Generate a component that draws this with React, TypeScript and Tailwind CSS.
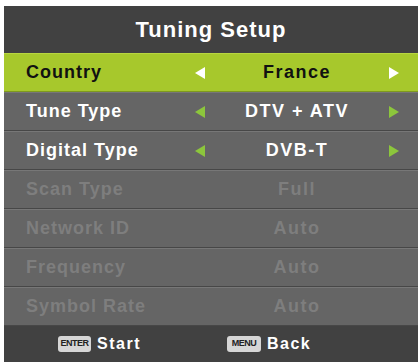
import React from "react";

type Row = { label: string; value: string; state: "active" | "normal" | "disabled" };

const rows: Row[] = [
  { label: "Country", value: "France", state: "active" },
  { label: "Tune Type", value: "DTV + ATV", state: "normal" },
  { label: "Digital Type", value: "DVB-T", state: "normal" },
  { label: "Scan Type", value: "Full", state: "disabled" },
  { label: "Network ID", value: "Auto", state: "disabled" },
  { label: "Frequency", value: "Auto", state: "disabled" },
  { label: "Symbol Rate", value: "Auto", state: "disabled" },
];

function Arrow({ dir, color }: { dir: "left" | "right"; color: string }) {
  return (
    <svg width="10" height="12" viewBox="0 0 10 12">
      {dir === "left" ? (
        <polygon points="10,0 10,12 0,6" fill={color} />
      ) : (
        <polygon points="0,0 0,12 10,6" fill={color} />
      )}
    </svg>
  );
}

function MenuRow({ row }: { row: Row }) {
  const active = row.state === "active";
  const disabled = row.state === "disabled";
  const bg = active
    ? "bg-[#a7c82c] border-t-[#b8d640] border-b-[#7f9a1e]"
    : "bg-[#656565] border-t-[#777777] border-b-[#474747]";
  const text = active ? "text-[#111111]" : disabled ? "text-[#7e7e7e]" : "text-white";
  const arrow = active ? "#ffffff" : "#8cc63c";

  return (
    <div className={`flex h-[39px] items-center border-t border-b ${bg}`}>
      <div className={`w-[186px] pl-[22px] text-[18px] font-bold tracking-[1px] ${text}`}>{row.label}</div>
      <div className="flex w-[20px] justify-center">
        {!disabled && <Arrow dir="left" color={arrow} />}
      </div>
      <div className={`flex-1 text-center text-[18px] font-bold tracking-[1.5px] ${text}`}>{row.value}</div>
      <div className="flex w-[20px] justify-center">
        {!disabled && <Arrow dir="right" color={arrow} />}
      </div>
      <div className="w-[14px]" />
    </div>
  );
}

function KeyBadge({ label, width }: { label: string; width: string }) {
  return (
    <span
      className={`flex h-[16px] ${width} items-center justify-center rounded-[3px] bg-[#d6d6d6] text-[9px] font-bold tracking-[-0.5px] text-[#222222]`}
    >
      {label}
    </span>
  );
}

export default function App() {
  return (
    <div className="h-[362px] w-[420px] bg-white pt-[6px] font-['Liberation_Sans',Arial,sans-serif]">
      <div className="ml-[4px] flex h-[356px] w-[414px] flex-col bg-[#414141]">
        <div className="flex h-[47px] items-center justify-center text-[22px] font-bold tracking-[1px] text-white">
          Tuning Setup
        </div>
        {rows.map((row) => (
          <MenuRow key={row.label} row={row} />
        ))}
        <div className="flex flex-1 items-center">
          <div className="flex items-center gap-[6px] pl-[54px]">
            <KeyBadge label="ENTER" width="w-[33px]" />
            <span className="text-[16px] font-bold tracking-[1.5px] text-white">Start</span>
          </div>
          <div className="flex items-center gap-[6px] pl-[86px]">
            <KeyBadge label="MENU" width="w-[34px]" />
            <span className="text-[16px] font-bold tracking-[1.5px] text-white">Back</span>
          </div>
        </div>
      </div>
    </div>
  );
}
